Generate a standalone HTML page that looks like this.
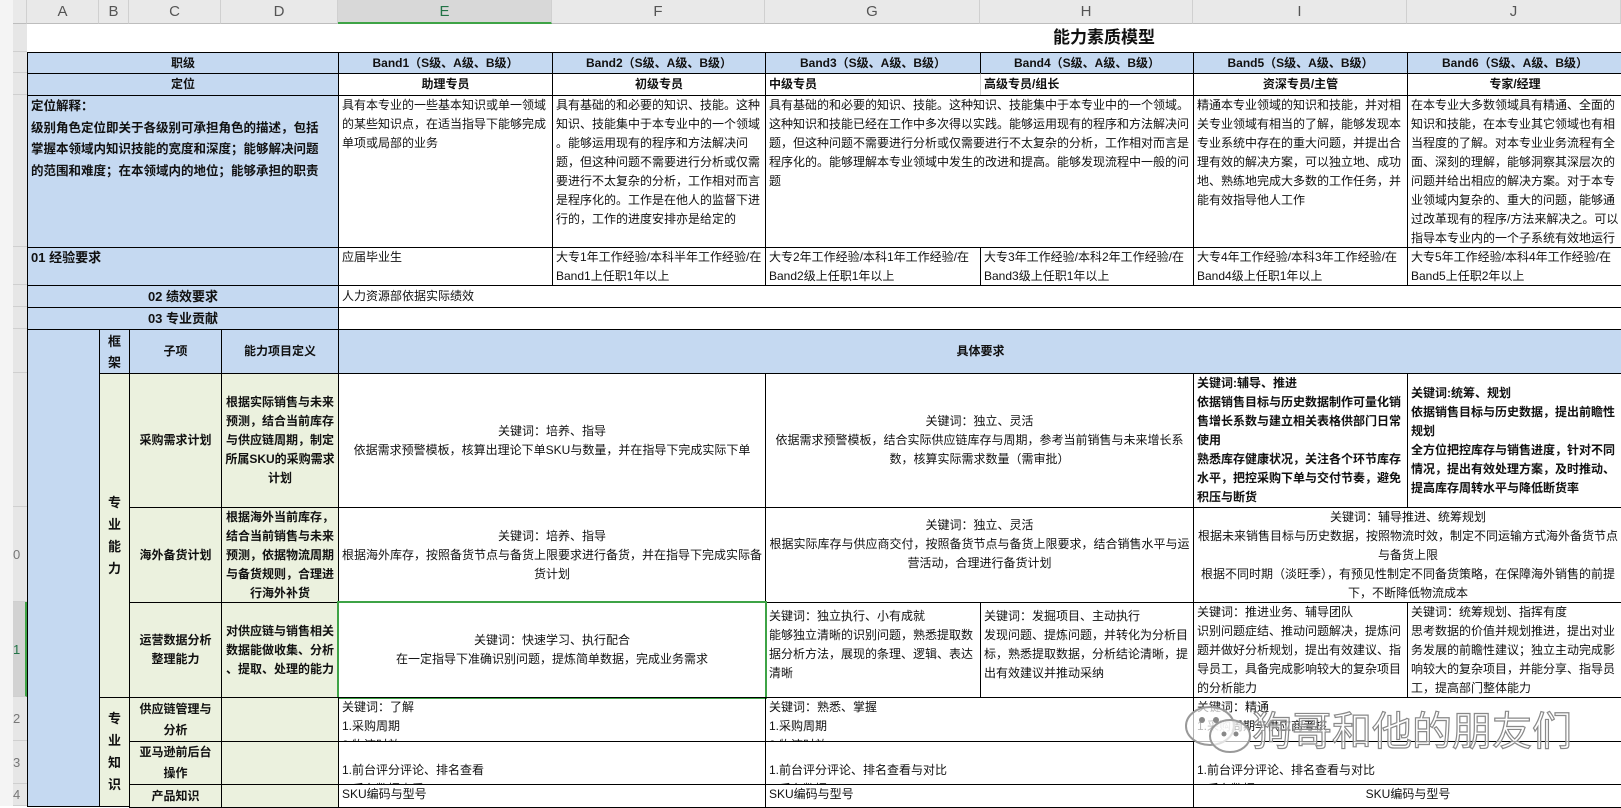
<!DOCTYPE html>
<html><head><meta charset="utf-8"><style>
*{margin:0;padding:0;box-sizing:border-box}
body{width:1621px;height:806px;overflow:hidden;background:#fff;position:relative;font-family:"Liberation Sans","Noto Sans CJK SC","WenQuanYi Zen Hei",sans-serif;font-size:12px;color:#111}
.x{position:absolute;border:1px solid #000;overflow:hidden;white-space:nowrap;line-height:19px;padding:0 3px}
.b{background:#c5d9f1}
.g{background:#ebf1de}
.w{background:#fff}
.bd{font-weight:bold}
.c{display:flex;flex-direction:column;justify-content:center;align-items:center;text-align:center}
.ml{display:flex;flex-direction:column;justify-content:center;align-items:flex-start}
.h{position:absolute;top:0;height:24px;background:#e9e9e9;border-right:1px solid #d0d0d0;border-bottom:1px solid #bdbdbd;color:#555;font-size:15px;text-align:center;line-height:23px}
.rh{position:absolute;left:13px;width:14px;background:#e6e6e6;border-bottom:1px solid #cfcfcf;color:#777;font-size:13px;overflow:hidden;text-align:left}
</style></head><body>
<div style="position:absolute;left:0;top:0;width:13px;height:806px;background:#f4f4f4"></div>
<div class="h" style="left:13px;width:14px"></div>
<div class="h" style="left:27px;width:72px">A</div>
<div class="h" style="left:99px;width:30px">B</div>
<div class="h" style="left:129px;width:92px">C</div>
<div class="h" style="left:221px;width:117px">D</div>
<div class="h" style="left:338px;width:214px;background:#d8d8d8;color:#217346;border-bottom:2px solid #3ea346">E</div>
<div class="h" style="left:552px;width:213px">F</div>
<div class="h" style="left:765px;width:215px">G</div>
<div class="h" style="left:980px;width:213px">H</div>
<div class="h" style="left:1193px;width:214px">I</div>
<div class="h" style="left:1407px;width:214px">J</div>
<div class="rh" style="top:24px;height:28px"></div>
<div class="rh" style="top:52px;height:21px"></div>
<div class="rh" style="top:73px;height:22px"></div>
<div class="rh" style="top:95px;height:152px"></div>
<div class="rh" style="top:247px;height:38px"></div>
<div class="rh" style="top:285px;height:22px"></div>
<div class="rh" style="top:307px;height:22px"></div>
<div class="rh" style="top:329px;height:44px"></div>
<div class="rh" style="top:373px;height:134px"></div>
<div class="rh" style="top:507px;height:95px;line-height:95px">0</div>
<div class="rh" style="top:602px;height:95px;line-height:95px;background:#d2d2d2;color:#217346;border-right:2px solid #3ea346">1</div>
<div class="rh" style="top:697px;height:44px;line-height:44px">2</div>
<div class="rh" style="top:741px;height:43px;line-height:43px">3</div>
<div class="rh" style="top:784px;height:22px;line-height:22px">4</div>

<div style="position:absolute;left:27px;top:24px;width:1594px;height:28px;text-align:center;font-weight:bold;font-size:17px;line-height:28px;padding-left:560px">能力素质模型</div>

<div class="x b bd c" style="left:27px;top:52px;width:312px;height:22px">职级</div>
<div class="x b bd c" style="left:338px;top:52px;width:215px;height:22px">Band1（S级、A级、B级）</div>
<div class="x b bd c" style="left:552px;top:52px;width:214px;height:22px">Band2（S级、A级、B级）</div>
<div class="x b bd c" style="left:765px;top:52px;width:216px;height:22px">Band3（S级、A级、B级）</div>
<div class="x b bd c" style="left:980px;top:52px;width:214px;height:22px">Band4（S级、A级、B级）</div>
<div class="x b bd c" style="left:1193px;top:52px;width:215px;height:22px">Band5（S级、A级、B级）</div>
<div class="x b bd c" style="left:1407px;top:52px;width:216px;height:22px">Band6（S级、A级、B级）</div>
<div class="x b bd c" style="left:27px;top:73px;width:312px;height:23px">定位</div>
<div class="x bd c" style="left:338px;top:73px;width:215px;height:23px">助理专员</div>
<div class="x bd c" style="left:552px;top:73px;width:214px;height:23px">初级专员</div>
<div class="x bd ml" style="left:765px;top:73px;width:216px;height:23px">中级专员</div>
<div class="x bd ml" style="left:980px;top:73px;width:214px;height:23px;border-left-color:#ccc">高级专员/组长</div>
<div class="x bd c" style="left:1193px;top:73px;width:215px;height:23px">资深专员/主管</div>
<div class="x bd c" style="left:1407px;top:73px;width:216px;height:23px">专家/经理</div>
<div class="x b bd" style="left:27px;top:95px;width:312px;height:153px;line-height:21.7px;font-size:12.5px">定位解释：<br>级别角色定位即关于各级别可承担角色的描述，包括<br>掌握本领域内知识技能的宽度和深度；能够解决问题<br>的范围和难度；在本领域内的地位；能够承担的职责</div>
<div class="x" style="left:338px;top:95px;width:215px;height:153px">具有本专业的一些基本知识或单一领域<br>的某些知识点，在适当指导下能够完成<br>单项或局部的业务</div>
<div class="x" style="left:552px;top:95px;width:214px;height:153px">具有基础的和必要的知识、技能。这种<br>知识、技能集中于本专业中的一个领域<br>。能够运用现有的程序和方法解决问<br>题，但这种问题不需要进行分析或仅需<br>要进行不太复杂的分析，工作相对而言<br>是程序化的。工作是在他人的监督下进<br>行的，工作的进度安排亦是给定的</div>
<div class="x" style="left:765px;top:95px;width:429px;height:153px">具有基础的和必要的知识、技能。这种知识、技能集中于本专业中的一个领域。<br>这种知识和技能已经在工作中多次得以实践。能够运用现有的程序和方法解决问<br>题，但这种问题不需要进行分析或仅需要进行不太复杂的分析，工作相对而言是<br>程序化的。能够理解本专业领域中发生的改进和提高。能够发现流程中一般的问<br>题</div>
<div class="x" style="left:1193px;top:95px;width:215px;height:153px">精通本专业领域的知识和技能，并对相<br>关专业领域有相当的了解，能够发现本<br>专业系统中存在的重大问题，并提出合<br>理有效的解决方案，可以独立地、成功<br>地、熟练地完成大多数的工作任务，并<br>能有效指导他人工作</div>
<div class="x" style="left:1407px;top:95px;width:216px;height:153px">在本专业大多数领域具有精通、全面的<br>知识和技能，在本专业其它领域也有相<br>当程度的了解。对本专业业务流程有全<br>面、深刻的理解，能够洞察其深层次的<br>问题并给出相应的解决方案。对于本专<br>业领域内复杂的、重大的问题，能够通<br>过改革现有的程序/方法来解决之。可以<br>指导本专业内的一个子系统有效地运行</div>
<div class="x b bd" style="left:27px;top:247px;width:312px;height:39px;font-size:13px">01 经验要求</div>
<div class="x" style="left:338px;top:247px;width:215px;height:39px">应届毕业生</div>
<div class="x" style="left:552px;top:247px;width:214px;height:39px">大专1年工作经验/本科半年工作经验/在<br>Band1上任职1年以上</div>
<div class="x" style="left:765px;top:247px;width:216px;height:39px">大专2年工作经验/本科1年工作经验/在<br>Band2级上任职1年以上</div>
<div class="x" style="left:980px;top:247px;width:214px;height:39px">大专3年工作经验/本科2年工作经验/在<br>Band3级上任职1年以上</div>
<div class="x" style="left:1193px;top:247px;width:215px;height:39px">大专4年工作经验/本科3年工作经验/在<br>Band4级上任职1年以上</div>
<div class="x" style="left:1407px;top:247px;width:216px;height:39px">大专5年工作经验/本科4年工作经验/在<br>Band5上任职2年以上</div>
<div class="x b bd c" style="left:27px;top:285px;width:312px;height:23px;font-size:13px">02 绩效要求</div>
<div class="x ml" style="left:338px;top:285px;width:1285px;height:23px">人力资源部依据实际绩效</div>
<div class="x b bd c" style="left:27px;top:307px;width:312px;height:23px;font-size:13px">03 专业贡献</div>
<div class="x" style="left:338px;top:307px;width:1285px;height:23px"></div>
<div class="x b" style="left:27px;top:329px;width:73px;height:478px"></div>
<div class="x b bd c" style="left:99px;top:329px;width:31px;height:45px;line-height:21px;font-size:13px">框<br>架</div>
<div class="x b bd c" style="left:129px;top:329px;width:93px;height:45px">子项</div>
<div class="x b bd c" style="left:221px;top:329px;width:118px;height:45px">能力项目定义</div>
<div class="x b bd c" style="left:338px;top:329px;width:1285px;height:45px">具体要求</div>
<div class="x g bd c" style="left:99px;top:373px;width:31px;height:325px;line-height:22px;font-size:13px">专<br>业<br>能<br>力</div>
<div class="x g bd c" style="left:99px;top:697px;width:31px;height:110px;line-height:22px;font-size:13px;justify-content:flex-start;padding-top:10px">专<br>业<br>知<br>识</div>
<div class="x g bd c" style="left:129px;top:373px;width:93px;height:135px">采购需求计划</div>
<div class="x g bd c" style="left:221px;top:373px;width:118px;height:135px">根据实际销售与未来<br>预测，结合当前库存<br>与供应链周期，制定<br>所属SKU的采购需求<br>计划</div>
<div class="x c" style="left:338px;top:373px;width:428px;height:135px">关键词：培养、指导<br>依据需求预警模板，核算出理论下单SKU与数量，并在指导下完成实际下单</div>
<div class="x c" style="left:765px;top:373px;width:429px;height:135px">关键词：独立、灵活<br>依据需求预警模板，结合实际供应链库存与周期，参考当前销售与未来增长系<br>数，核算实际需求数量（需审批）</div>
<div class="x bd" style="left:1193px;top:373px;width:215px;height:135px">关键词:辅导、推进<br>依据销售目标与历史数据制作可量化销<br>售增长系数与建立相关表格供部门日常<br>使用<br>熟悉库存健康状况，关注各个环节库存<br>水平，把控采购下单与交付节奏，避免<br>积压与断货</div>
<div class="x bd ml" style="left:1407px;top:373px;width:216px;height:135px">关键词:统筹、规划<br>依据销售目标与历史数据，提出前瞻性<br>规划<br>全方位把控库存与销售进度，针对不同<br>情况，提出有效处理方案，及时推动、<br>提高库存周转水平与降低断货率</div>
<div class="x g bd c" style="left:129px;top:507px;width:93px;height:96px">海外备货计划</div>
<div class="x g bd c" style="left:221px;top:507px;width:118px;height:96px">根据海外当前库存，<br>结合当前销售与未来<br>预测，依据物流周期<br>与备货规则，合理进<br>行海外补货</div>
<div class="x c" style="left:338px;top:507px;width:428px;height:96px">关键词：培养、指导<br>根据海外库存，按照备货节点与备货上限要求进行备货，并在指导下完成实际备<br>货计划</div>
<div class="x c" style="left:765px;top:507px;width:429px;height:96px;justify-content:flex-start;padding-top:8px">关键词：独立、灵活<br>根据实际库存与供应商交付，按照备货节点与备货上限要求，结合销售水平与运<br>营活动，合理进行备货计划</div>
<div class="x c" style="left:1193px;top:507px;width:430px;height:96px">关键词：辅导推进、统筹规划<br>根据未来销售目标与历史数据，按照物流时效，制定不同运输方式海外备货节点<br>与备货上限<br>根据不同时期（淡旺季），有预见性制定不同备货策略，在保障海外销售的前提<br>下，不断降低物流成本</div>
<div class="x g bd c" style="left:129px;top:602px;width:93px;height:96px">运营数据分析<br>整理能力</div>
<div class="x g bd c" style="left:221px;top:602px;width:118px;height:96px">对供应链与销售相关<br>数据能做收集、分析<br>、提取、处理的能力</div>
<div class="x" style="left:765px;top:602px;width:216px;height:96px;padding-top:4px">关键词：独立执行、小有成就<br>能够独立清晰的识别问题，熟悉提取数<br>据分析方法，展现的条理、逻辑、表达<br>清晰</div>
<div class="x" style="left:980px;top:602px;width:214px;height:96px;padding-top:4px">关键词：发掘项目、主动执行<br>发现问题、提炼问题，并转化为分析目<br>标，熟悉提取数据，分析结论清晰，提<br>出有效建议并推动采纳</div>
<div class="x" style="left:1193px;top:602px;width:215px;height:96px">关键词：推进业务、辅导团队<br>识别问题症结、推动问题解决，提炼问<br>题并做好分析规划，提出有效建议、指<br>导员工，具备完成影响较大的复杂项目<br>的分析能力</div>
<div class="x" style="left:1407px;top:602px;width:216px;height:96px">关键词：统筹规划、指挥有度<br>思考数据的价值并规划推进，提出对业<br>务发展的前瞻性建议；独立主动完成影<br>响较大的复杂项目，并能分享、指导员<br>工，提高部门整体能力</div>
<div class="x c" style="left:337px;top:601px;width:430px;height:98px;border:2px solid #3ea346;background:#fff">关键词：快速学习、执行配合<br>在一定指导下准确识别问题，提炼简单数据，完成业务需求</div>
<div class="x g bd c" style="left:129px;top:697px;width:93px;height:45px;line-height:21px">供应链管理与<br>分析</div>
<div class="x g" style="left:221px;top:697px;width:118px;height:45px"></div>
<div class="x" style="left:338px;top:697px;width:428px;height:45px">关键词：了解<br>1.采购周期<br>2.物流时效</div>
<div class="x" style="left:765px;top:697px;width:429px;height:45px">关键词：熟悉、掌握<br>1.采购周期<br>2.物流时效</div>
<div class="x" style="left:1193px;top:697px;width:430px;height:45px">关键词：精通<br>1.采购周期与供应商考核</div>
<div class="x g bd c" style="left:129px;top:741px;width:93px;height:44px;line-height:21px">亚马逊前后台<br>操作</div>
<div class="x g" style="left:221px;top:741px;width:118px;height:44px"></div>
<div class="x" style="left:338px;top:741px;width:428px;height:44px"><br>1.前台评分评论、排名查看<br>2.后台数据查看</div>
<div class="x" style="left:765px;top:741px;width:429px;height:44px"><br>1.前台评分评论、排名查看与对比<br>2.后台数据</div>
<div class="x" style="left:1193px;top:741px;width:430px;height:44px"><br>1.前台评分评论、排名查看与对比<br>2.后台数据</div>
<div class="x g bd c" style="left:129px;top:784px;width:93px;height:24px">产品知识</div>
<div class="x g" style="left:221px;top:784px;width:118px;height:24px"></div>
<div class="x" style="left:338px;top:784px;width:428px;height:24px">SKU编码与型号</div>
<div class="x" style="left:765px;top:784px;width:429px;height:24px">SKU编码与型号</div>
<div class="x" style="left:1193px;top:784px;width:430px;height:24px;text-align:center">SKU编码与型号</div>

<svg style="position:absolute;left:1180px;top:700px" width="80" height="60" viewBox="0 0 80 60">
<ellipse cx="30" cy="26" rx="24" ry="19" fill="rgba(255,255,255,0.7)" stroke="#999" stroke-width="2"/>
<ellipse cx="50" cy="36" rx="20" ry="16" fill="rgba(255,255,255,0.7)" stroke="#999" stroke-width="2"/>
<circle cx="22" cy="20" r="3" fill="#888"/><circle cx="36" cy="20" r="3" fill="#888"/>
<circle cx="44" cy="34" r="2.5" fill="#888"/><circle cx="56" cy="34" r="2.5" fill="#888"/>
</svg>
<div style="position:absolute;left:1252px;top:703px;font-size:40px;line-height:50px;color:rgba(255,255,255,0.6);-webkit-text-stroke:1.2px #888;font-family:'Noto Sans CJK SC',sans-serif;white-space:nowrap">狗哥和他的朋友们</div>
</body></html>
